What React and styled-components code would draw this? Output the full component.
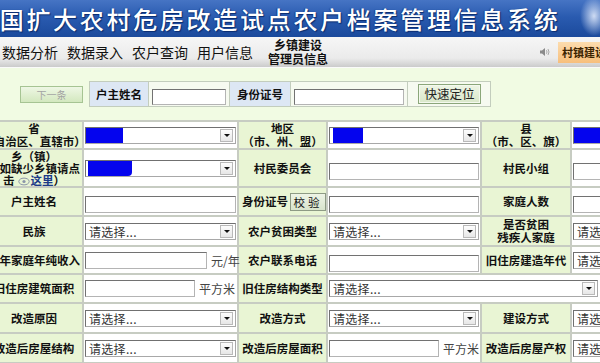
import React from 'react'
import styled, { createGlobalStyle } from 'styled-components'

const GlobalStyle = createGlobalStyle`
  html, body {
    margin: 0;
    padding: 0;
    background: #f1fbe3;
    overflow: hidden;
  }
  body {
    font-family: "Noto Sans CJK SC", "Noto Sans", sans-serif;
    color: #111;
  }
`

const Page = styled.div`
  width: 716px;
  margin-left: -16px;
`

const TitleBar = styled.div`
  height: 37px;
  background:
    radial-gradient(ellipse 14px 20px at 610px 16px, rgba(235, 242, 255, 0.85), rgba(235, 242, 255, 0) 100%),
    linear-gradient(180deg, #4674c4 0%, #2a5bb0 45%, #1b4a9c 100%);
  color: #fff;
  font-size: 24px;
  font-weight: 500;
  letter-spacing: 2.7px;
  line-height: 37px;
  text-indent: -11px;
  white-space: nowrap;
  overflow: hidden;
  text-shadow: 1px 1px 1px #0b2c6e, -1px 0 1px #14408a;
`

const MenuBar = styled.div`
  height: 30px;
  display: flex;
  align-items: center;
  padding-left: 18px;
  background: linear-gradient(180deg, #f6f6f6 0%, #ebebeb 70%, #d6d6d6 90%, #cbcbcb 100%);
  border-bottom: 1px solid #fafafa;
`

const MenuItem = styled.span`
  font-size: 14px;
  margin-right: 9px;
  white-space: nowrap;
`

const AdminBlock = styled.div`
  margin-left: 6px;
  display: flex;
  flex-direction: column;
  align-items: center;
  font-size: 12px;
  font-weight: 700;
  line-height: 14px;
`

const Notice = styled.div`
  margin-left: auto;
  display: flex;
  align-items: center;
  gap: 8px;
`

const NoticeBox = styled.div`
  width: 138px;
  height: 21px;
  background: linear-gradient(180deg, #fcdcae 0%, #f7bf7c 100%);
  font-size: 11px;
  font-weight: 700;
  color: #3b2300;
  line-height: 21px;
  padding-left: 4px;
  white-space: nowrap;
  overflow: hidden;
`

const QuickArea = styled.div`
  height: 52px;
  display: flex;
  align-items: center;
  padding-left: 36px;
  gap: 6px;
`

const PagerButton = styled.div`
  width: 61px;
  height: 15px;
  border: 1px solid #a6c493;
  background: linear-gradient(180deg, #eef7e4 0%, #d3e8bf 100%);
  color: #a3a3a3;
  font-size: 10px;
  line-height: 15px;
  text-align: center;
`

const QuickTable = styled.table`
  border-collapse: collapse;
  table-layout: fixed;
  height: 26px;
`

const QuickLabel = styled.td`
  width: ${p => p.$w}px;
  border: 1px solid #c3cdbd;
  background: #dde7f4;
  font-size: 11.5px;
  font-weight: 700;
  text-align: center;
  padding: 0;
`

const QuickCell = styled.td`
  width: ${p => p.$w}px;
  border: 1px solid #c3cdbd;
  background: #f6faf0;
  padding: 0 3px;
`

const ActionButton = styled.div`
  width: 61px;
  height: 18px;
  margin-left: 7px;
  border: 1px solid #8ba67a;
  box-shadow: inset 0 0 0 1px #f4f9ee;
  background: linear-gradient(180deg, #eef5e5 0%, #d9e7c9 100%);
  font-size: 12.5px;
  line-height: 18px;
  text-align: center;
  color: #222;
`

const FormTable = styled.table`
  border-collapse: collapse;
  table-layout: fixed;
  width: 716px;
`

const Row = styled.tr`
  height: ${p => p.$h}px;
`

const LabelCell = styled.td`
  background: #e9f5d4;
  border: 2px solid #c7ccc2;
  padding: 0;
  vertical-align: middle;
`

const LabelInner = styled.div`
  display: flex;
  align-items: center;
  flex-direction: ${p => (p.$left ? 'row' : 'column')};
  padding-left: ${p => (p.$left ? 3 : 0)}px;
  font-size: 11.5px;
  font-weight: 700;
  line-height: ${p => (p.$tight ? 12 : 13)}px;
  white-space: nowrap;
`

const FieldCell = styled.td`
  background: #fff;
  border: 2px solid #c7ccc2;
  padding: 0 1px;
  vertical-align: middle;
`

const FieldLine = styled.div`
  display: flex;
  align-items: center;
`

const SelectBox = styled.div`
  box-sizing: border-box;
  width: ${p => (p.$w ? `${p.$w}px` : '100%')};
  height: 17px;
  display: flex;
  align-items: center;
  border: 1px solid #a8a8a8;
  border-top-color: #707070;
  border-left-color: #707070;
  background: #fff;
  font-size: 12px;
  color: #333;
  overflow: hidden;
`

const SelectText = styled.span`
  flex: 1;
  padding-left: 3px;
  white-space: nowrap;
  letter-spacing: 0.3px;
`

const Redacted = styled.span`
  width: ${p => p.$w}px;
  height: 15px;
  margin-left: ${p => p.$offset || 0}px;
  background: #0404ee;
  border-radius: 0 0 ${p => (p.$round ? 4 : 0)}px 0;
  flex: none;
`

const ArrowButton = styled.span`
  width: 11px;
  height: 11px;
  margin-right: 2px;
  border: 1px solid #b9b9b9;
  background: linear-gradient(180deg, #fdfdfd, #e7e7e7);
  display: flex;
  align-items: center;
  justify-content: center;
  flex: none;
  &::after {
    content: '';
    border-left: 3px solid transparent;
    border-right: 3px solid transparent;
    border-top: 3px solid #111;
  }
`

const TextBox = styled.input`
  box-sizing: border-box;
  width: ${p => (p.$w ? `${p.$w}px` : '100%')};
  height: ${p => p.$h || 17}px;
  border: 1px solid #b4b4b4;
  border-top-color: #727272;
  border-left-color: #727272;
  background: #fff;
  padding: 0 2px;
  margin: 0;
  font-size: 12px;
  outline: none;
  flex: none;
`

const Unit = styled.span`
  font-size: 12px;
  color: #444;
  margin-left: 4px;
  white-space: nowrap;
`

const CheckButton = styled.span`
  width: 36px;
  height: 16px;
  margin-left: 2px;
  border: 1px solid #8e9b85;
  background: linear-gradient(180deg, #eef4e6, #d8e4cc);
  font-size: 11.5px;
  font-weight: 400;
  line-height: 16px;
  text-align: center;
  letter-spacing: 3px;
`

const HereLink = styled.span`
  color: #1b3a88;
`

const Speaker = () => (
  <svg width="11" height="10" viewBox="0 0 11 10">
    <path d="M1 3.5h2l3-2.5v8l-3-2.5H1z" fill="#8a8a8a" />
    <path d="M7.5 3.2q1 1.8 0 3.6M9 2q2 3 0 6" stroke="#a0a0a0" strokeWidth="0.9" fill="none" />
  </svg>
)

const Pointer = () => (
  <svg width="12" height="9" viewBox="0 0 12 9" style={{ margin: '0 1px 0 3px', verticalAlign: '-1px' }}>
    <ellipse cx="6" cy="4.5" rx="5.2" ry="3.4" fill="none" stroke="#8b95a8" strokeWidth="1" />
    <circle cx="6" cy="4.5" r="1.6" fill="#8b95a8" />
  </svg>
)

const Select = ({ text = '请选择...', w, redact, offset, round }) => (
  <SelectBox $w={w}>
    {redact ? <Redacted $w={redact} $offset={offset} $round={round} /> : null}
    <SelectText>{redact ? '' : text}</SelectText>
    <ArrowButton />
  </SelectBox>
)

const Label = ({ lines, left, tight, children }) => (
  <LabelCell>
    <LabelInner $left={left} $tight={tight}>
      {children || lines.map((l, i) => <span key={i}>{l}</span>)}
    </LabelInner>
  </LabelCell>
)

export default function App() {
  return (
    <Page>
      <GlobalStyle />
      <TitleBar>全国扩大农村危房改造试点农户档案管理信息系统</TitleBar>
      <MenuBar>
        <MenuItem>数据分析</MenuItem>
        <MenuItem>数据录入</MenuItem>
        <MenuItem>农户查询</MenuItem>
        <MenuItem>用户信息</MenuItem>
        <AdminBlock>
          <span>乡镇建设</span>
          <span>管理员信息</span>
        </AdminBlock>
        <Notice>
          <Speaker />
          <NoticeBox>村镇建设试点工作通知</NoticeBox>
        </Notice>
      </MenuBar>

      <QuickArea>
        <PagerButton>下一条</PagerButton>
        <QuickTable>
          <tbody>
            <tr>
              <QuickLabel $w={58}>户主姓名</QuickLabel>
              <QuickCell $w={74}>
                <TextBox $h={16} />
              </QuickCell>
              <QuickLabel $w={60}>身份证号</QuickLabel>
              <QuickCell $w={110}>
                <TextBox $h={16} />
              </QuickCell>
              <QuickCell $w={76}>
                <ActionButton>快速定位</ActionButton>
              </QuickCell>
            </tr>
          </tbody>
        </QuickTable>
      </QuickArea>

      <FormTable>
        <colgroup>
          <col style={{ width: 98 }} />
          <col style={{ width: 155 }} />
          <col style={{ width: 89 }} />
          <col style={{ width: 154 }} />
          <col style={{ width: 90 }} />
          <col style={{ width: 130 }} />
        </colgroup>
        <tbody>
          <Row $h={28}>
            <Label lines={['省', '（自治区、直辖市）']} />
            <FieldCell><Select redact={37} /></FieldCell>
            <Label lines={['地区', '（市、州、盟）']} />
            <FieldCell><Select redact={30} offset={3} /></FieldCell>
            <Label lines={['县', '（市、区、旗）']} />
            <FieldCell><Select redact={60} /></FieldCell>
          </Row>
          <Row $h={37}>
            <Label tight>
              <span>乡（镇）</span>
              <span>（如缺少乡镇请点</span>
              <span>击<Pointer /><HereLink>这里</HereLink>）</span>
            </Label>
            <FieldCell><Select redact={44} offset={2} round /></FieldCell>
            <Label lines={['村民委员会']} />
            <FieldCell><TextBox /></FieldCell>
            <Label lines={['村民小组']} />
            <FieldCell><TextBox /></FieldCell>
          </Row>
          <Row $h={29}>
            <Label lines={['户主姓名']} />
            <FieldCell><TextBox /></FieldCell>
            <Label left>
              <span>身份证号</span>
              <CheckButton>校验</CheckButton>
            </Label>
            <FieldCell><TextBox /></FieldCell>
            <Label lines={['家庭人数']} />
            <FieldCell><TextBox /></FieldCell>
          </Row>
          <Row $h={30}>
            <Label lines={['民族']} />
            <FieldCell><Select /></FieldCell>
            <Label lines={['农户贫困类型']} />
            <FieldCell><Select /></FieldCell>
            <Label lines={['是否贫困', '残疾人家庭']} />
            <FieldCell><Select /></FieldCell>
          </Row>
          <Row $h={28}>
            <Label lines={['上年家庭年纯收入']} />
            <FieldCell>
              <FieldLine><TextBox $w={122} /><Unit>元/年</Unit></FieldLine>
            </FieldCell>
            <Label lines={['农户联系电话']} />
            <FieldCell><TextBox /></FieldCell>
            <Label lines={['旧住房建造年代']} />
            <FieldCell><Select /></FieldCell>
          </Row>
          <Row $h={29}>
            <Label lines={['旧住房建筑面积']} />
            <FieldCell>
              <FieldLine><TextBox $w={110} /><Unit>平方米</Unit></FieldLine>
            </FieldCell>
            <Label lines={['旧住房结构类型']} />
            <FieldCell colSpan={3}><Select w={269} /></FieldCell>
          </Row>
          <Row $h={30}>
            <Label lines={['改造原因']} />
            <FieldCell><Select /></FieldCell>
            <Label lines={['改造方式']} />
            <FieldCell><Select /></FieldCell>
            <Label lines={['建设方式']} />
            <FieldCell><Select /></FieldCell>
          </Row>
          <Row $h={30}>
            <Label lines={['改造后房屋结构']} />
            <FieldCell><Select /></FieldCell>
            <Label lines={['改造后房屋面积']} />
            <FieldCell>
              <FieldLine><TextBox $w={110} /><Unit>平方米</Unit></FieldLine>
            </FieldCell>
            <Label lines={['改造后房屋产权']} />
            <FieldCell><Select /></FieldCell>
          </Row>
        </tbody>
      </FormTable>
    </Page>
  )
}
